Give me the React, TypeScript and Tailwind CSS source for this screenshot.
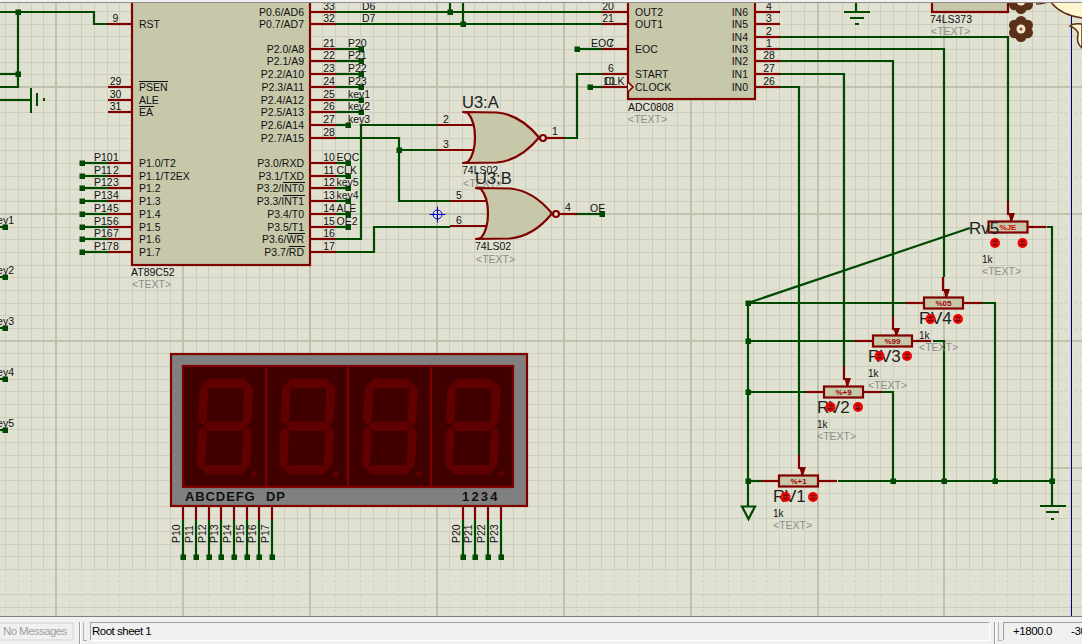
import React from "react";

const RED = "#800000";
const GRN = "#004a00";
const SW = 2.2;
const FONT = "'Liberation Sans', Arial, sans-serif";
const MINOR = "#cdcebd";
const MAJOR = "#c0c1ae";

const T = ({ x, y, s, size = 10.5, anchor = "start", fill = "#111", w }: { x: number; y: number; s: string; size?: number; anchor?: "start" | "middle" | "end"; fill?: string; w?: number }) => (
  <text x={x} y={y} fontSize={size} textAnchor={anchor} fill={fill} fontFamily={FONT} fontWeight={w}>
    {s}
  </text>
);
const Wire = ({ p, c = GRN }: { p: string; c?: string }) => <polyline points={p} fill="none" stroke={c} strokeWidth={SW} />;
const Pin = ({ x1, x2, y }: { x1: number; x2: number; y: number }) => <line x1={x1} x2={x2} y1={y} y2={y} stroke={RED} strokeWidth={SW} />;
const J = ({ x, y }: { x: number; y: number }) => <rect x={x - 2.5} y={y - 2.5} width={5.5} height={5.5} fill={GRN} />;
const Txt = ({ x, y }: { x: number; y: number }) => <T x={x} y={y} s="<TEXT>" fill="#8c8c8c" />;

const seq = (a: number, n: number, d = 12.68) => Array.from({ length: n }, (_, i) => Math.round(a + i * d));

const gridX = seq(5.3, 85);
const majorX = [56, 183, 310, 437, 564, 691, 818, 944];
const gridY = seq(10, 48).filter((y) => y < 614);
const majorY = [86, 213, 340];

const Grid = () => (
  <g shapeRendering="crispEdges">
    {gridX.map((x) => (
      <g key={x}>
        <line x1={x + 0.5} x2={x + 0.5} y1={0} y2={569} stroke={MINOR} />
        <line x1={x + 0.5} x2={x + 0.5} y1={569} y2={616} stroke={MINOR} strokeDasharray="2 3" />
      </g>
    ))}
    {gridY.map((y) => {
      const low = y > 572 && y < 590;
      const dotted = y > 50 && y < 430;
      return (
        <g key={y}>
          <line x1={0} x2={dotted ? 1050 : 1082} y1={y + 0.5} y2={y + 0.5} stroke={MINOR} strokeDasharray={low ? "1 12" : undefined} />
          {dotted && <line x1={1050} x2={1082} y1={y + 0.5} y2={y + 0.5} stroke={MINOR} strokeDasharray="2 3" />}
        </g>
      );
    })}
    {majorX.map((x) => (
      <rect key={x} x={x - 1} y={0} width={2} height={616} fill={MAJOR} />
    ))}
    {majorY.map((y) => (
      <rect key={y} x={0} y={y - 1} width={1082} height={2} fill={MAJOR} />
    ))}
    <rect x={1050} y={466} width={32} height={2} fill={MAJOR} />
  </g>
);

const leftCtl: [number, string, string][] = [
  [23, "9", "RST"],
  [86, "29", "PSEN"],
  [99, "30", "ALE"],
  [111, "31", "EA"],
];
const p1y = [162, 175, 187, 200, 213, 226, 238, 251];
const p1n = ["P1.0/T2", "P1.1/T2EX", "P1.2", "P1.3", "P1.4", "P1.5", "P1.6", "P1.7"];
const right: [number, string, string][] = [
  [11, "33", "P0.6/AD6"],
  [23, "32", "P0.7/AD7"],
  [48, "21", "P2.0/A8"],
  [60, "22", "P2.1/A9"],
  [73, "23", "P2.2/A10"],
  [86, "24", "P2.3/A11"],
  [99, "25", "P2.4/A12"],
  [111, "26", "P2.5/A13"],
  [124, "27", "P2.6/A14"],
  [137, "28", "P2.7/A15"],
  [162, "10", "P3.0/RXD"],
  [175, "11", "P3.1/TXD"],
  [187, "12", "P3.2/INT0"],
  [200, "13", "P3.3/INT1"],
  [213, "14", "P3.4/T0"],
  [226, "15", "P3.5/T1"],
  [238, "16", "P3.6/WR"],
  [251, "17", "P3.7/RD"],
];

const Mcu = () => (
  <g>
    <rect x={132} y={-4} width={178} height={268} fill="#c7c8aa" stroke={RED} strokeWidth={SW} />
    {leftCtl.map(([y, n, l]) => (
      <g key={n}>
        <Pin x1={108} x2={132} y={y} />
        <T x={115.5} y={y - 2} s={n} anchor="middle" />
        <T x={139} y={y + 3.5} s={l} />
      </g>
    ))}
    <line x1={139} x2={168} y1={80.5} y2={80.5} stroke="#111" />
    <line x1={139} x2={154} y1={105.5} y2={105.5} stroke="#111" />
    {p1y.map((y, i) => (
      <g key={y}>
        <Pin x1={108} x2={132} y={y} />
        <polyline points={`82,${y} 108,${y}`} stroke={GRN} strokeWidth={SW} />
        <J x={82} y={y} />
        <T x={94} y={y - 2} s={`P1${i}`} />
        <T x={116} y={y - 2} s={String(i + 1)} anchor="middle" />
        <T x={139} y={y + 3.5} s={p1n[i]} />
      </g>
    ))}
    {right.map(([y, n, l]) => (
      <g key={n}>
        <Pin x1={310} x2={336} y={y} />
        <T x={329} y={y - 2} s={n} anchor="middle" />
        <T x={304} y={y + 3.5} s={l} anchor="end" />
      </g>
    ))}
    {[181.5, 194.5].map((y) => (
      <line key={y} x1={283} x2={305} y1={y} y2={y} stroke="#111" />
    ))}
    <line x1={288} x2={305} y1={232.5} y2={232.5} stroke="#111" />
    <line x1={289} x2={305} y1={245.5} y2={245.5} stroke="#111" />
    <T x={131} y={275} s="AT89C52" />
    <Txt x={132} y={287} />
  </g>
);

const McuNets = () => (
  <g>
    <Wire p="108,23 94,23 94,11 0,11" />
    <Wire p="18,11 18,86 0,86" />
    <Wire p="18,73 0,73" />
    <J x={18} y={11} />
    <J x={18} y={73} />
    <Wire p="0,99 31,99" />
    <rect x={30} y={87} width={2} height={25} fill={GRN} />
    <rect x={36} y={92} width={2} height={13} fill={GRN} />
    <rect x={43} y={97} width={2} height={3} fill={GRN} />
    {[
      [226, "key1"],
      [276, "key2"],
      [327, "key3"],
      [378, "key4"],
      [429, "key5"],
    ].map(([y, l]) => (
      <g key={l as string}>
        <Wire p={`0,${y} 5,${y}`} />
        <J x={5} y={y as number} />
        <T x={14} y={(y as number) - 3} s={l as string} anchor="end" />
      </g>
    ))}
    <Wire p="336,11 602,11" />
    <Wire p="336,23 602,23" />
    <Wire p="450,2 450,11" />
    <Wire p="463,2 463,23" />
    <J x={450} y={11} />
    <J x={463} y={23} />
    <T x={362} y={9} s="D6" />
    <T x={362} y={21} s="D7" />
    {[
      [48, "P20"],
      [60, "P21"],
      [73, "P22"],
      [86, "P23"],
      [99, "key1"],
      [111, "key2"],
    ].map(([y, l]) => (
      <g key={l as string}>
        <Wire p={`336,${y} 361,${y}`} />
        <J x={361} y={y as number} />
        <T x={348} y={(y as number) - 2} s={l as string} />
      </g>
    ))}
    <Wire p="336,124 348,124" />
    <J x={348} y={124} />
    <T x={348} y={122} s="key3" />
    <Wire p="437,124 361,124 361,238 336,238" />
    <Wire p="336,137 399,137 399,200 450,200" />
    <Wire p="399,149 437,149" />
    <J x={399} y={149} />
    <Wire p="336,251 374,251 374,226 450,226" />
    {[
      [162, "EOC"],
      [175, "CLK"],
      [187, "key5"],
      [200, "key4"],
      [213, "ALE"],
      [226, "OE2"],
    ].map(([y, l]) => (
      <g key={l as string}>
        <Wire p={`336,${y} 348,${y}`} />
        <J x={348} y={y as number} />
        <T x={336.5} y={(y as number) - 2} s={l as string} />
      </g>
    ))}
  </g>
);

const Gate = ({ dx, dy, a, b, o, ref1 }: { dx: number; dy: number; a: string; b: string; o: string; ref1: string }) => (
  <g transform={`translate(${dx} ${dy})`}>
    <Pin x1={437} x2={475} y={124} />
    <Pin x1={437} x2={475} y={149} />
    <path d="M463 111 L497 111.5 C513 113 528 123 539 136.5 C528 150 513 160 497 161.5 L463 162 L468 161 C473 155 475 147 475 136.5 C475 126 473 118 468 112 Z" fill="#c7c8aa" stroke={RED} strokeWidth={SW} strokeLinejoin="round" />
    <circle cx={543} cy={137} r={3} fill="#e0e1d1" stroke={RED} strokeWidth={SW} />
    <Pin x1={546} x2={564} y={137} />
    <T x={446} y={122} s={a} anchor="middle" />
    <T x={446} y={147} s={b} anchor="middle" />
    <T x={555} y={134} s={o} anchor="middle" />
    <T x={462} y={107} s={ref1} size={16.5} fill="#222" />
    <T x={462} y={173} s="74LS02" />
    <Txt x={463} y={186} />
  </g>
);

const Adc = () => (
  <g>
    <rect x={628} y={-4} width={127} height={102} fill="#c7c8aa" stroke={RED} strokeWidth={SW} />
    {[
      [11, "20", "OUT2"],
      [23, "21", "OUT1"],
      [48, "7", "EOC"],
      [73, "6", "START"],
      [86, "", "CLOCK"],
    ].map(([y, n, l]) => (
      <g key={l as string}>
        <Pin x1={602} x2={628} y={y as number} />
        {n && <T x={(n as string).length > 1 ? 608 : 611} y={(y as number) - 2} s={n as string} anchor="middle" />}
        <T x={635} y={(y as number) + 3.5} s={l as string} />
      </g>
    ))}
    <T x={609} y={84} s="10" anchor="middle" />
    <T x={604} y={84} s="CLK" />
    <polyline points="628,81 633,86 628,91" fill="#e0e1d1" stroke={RED} strokeWidth={1.6} />
    {[
      [11, "4", "IN6"],
      [23, "3", "IN5"],
      [36, "2", "IN4"],
      [48, "1", "IN3"],
      [60, "28", "IN2"],
      [73, "27", "IN1"],
      [86, "26", "IN0"],
    ].map(([y, n, l]) => (
      <g key={l as string}>
        <Pin x1={755} x2={780} y={y as number} />
        <T x={769} y={(y as number) - 2} s={n as string} anchor="middle" />
        <T x={748} y={(y as number) + 3.5} s={l as string} anchor="end" />
      </g>
    ))}
    <T x={628} y={110} s="ADC0808" />
    <Txt x={628} y={122} />
    <Wire p="602,48 577,48" />
    <J x={577} y={48} />
    <T x={591} y={46} s="EOC" />
    <Wire p="602,86 590,86" />
    <J x={590} y={86} />
    <Wire p="564,137 577,137 577,73 602,73" />
    <Wire p="577,213 602,213" />
    <J x={602} y={213} />
    <T x={590} y={211} s="OE" />
  </g>
);

const Pot = ({ x, y, wx, wt, name, tag, nx, ty, cy, lx, ly, gnd }: { x: number; y: number; wx: number; wt: number; name: string; tag: string; nx: number; ty: number; cy: number; lx?: number; ly?: number; gnd?: boolean }) => (
  <g>
    {!gnd && <Pin x1={x - 18} x2={x} y={y} />}
    <Pin x1={x + 39} x2={x + 58} y={y} />
    <polyline points={`${wx},${wt} ${wx},${wt + 13} ${wx + 3},${wt + 13} ${wx + 3},${y - 6}`} fill="none" stroke={RED} strokeWidth={SW} />
    <polygon points={`${wx},${wt + 12} ${wx + 7},${wt + 12} ${wx + 3.5},${y - 4}`} fill={RED} />
    <rect x={x} y={y - 5.5} width={39} height={11} fill="#c7c8aa" stroke={RED} strokeWidth={SW} />
    <text x={x + 19.5} y={y + 3} fontSize={8} fill={gnd ? "#d80000" : "#a00000"} textAnchor="middle" fontFamily={FONT} fontWeight={700}>
      {tag}
    </text>
    <T x={nx} y={ty} s={name} size={17} fill="#222" />
    {[x + 6.5, x + 34].map((c, i) => (
      <g key={i}>
        <circle cx={c} cy={cy} r={5} fill="#ee0000" />
        <circle cx={c} cy={cy} r={2.6} fill="#700000" />
        <line x1={c - 4} x2={c + 4} y1={cy} y2={cy} stroke="#ff3030" />
      </g>
    ))}
    <T x={lx ?? nx} y={ly ?? ty + 14.5} s="1k" size={10} />
    <Txt x={lx ?? nx} y={(ly ?? ty + 14.5) + 12} />
  </g>
);

const Pots = () => (
  <g>
    <Wire p="780,36 1008,36 1008,200" />
    <Wire p="780,48 944,48 944,276" />
    <Wire p="780,60 893,60 893,315" />
    <Wire p="780,73 844,73 844,365" />
    <Wire p="780,86 799,86 799,454" />
    <Wire p="748,302 970,227" />
    <Wire p="748,302 748,505" />
    <Wire p="748,302 907,302" />
    <Wire p="748,340 856,340" />
    <Wire p="748,391 806,391" />
    <Wire p="748,480 761,480" />
    <Wire p="838,480 1052,480" />
    <Wire p="881,391 893,391 893,480" />
    <Wire p="933,340 944,340 944,480" />
    <Wire p="982,302 995,302 995,480" />
    <Wire p="1047,226 1052,226 1052,505" />
    {[
      [748, 302],
      [748, 340],
      [748, 391],
      [748, 480],
      [893, 480],
      [944, 480],
      [995, 480],
      [1052, 480],
    ].map(([x, y]) => (
      <J key={`${x}-${y}`} x={x} y={y} />
    ))}
    <polygon points="742,505.5 755,505.5 748.5,518" fill="none" stroke={GRN} strokeWidth={SW} />
    <rect x={1040} y={504} width={26} height={2} fill={GRN} />
    <rect x={1046} y={510} width={13} height={2} fill={GRN} />
    <rect x={1051} y={517} width={3} height={2} fill={GRN} />
    <Pot x={988.5} y={226} wx={1008} wt={200} name="Rv5" tag="%JE" nx={969} ty={233} cy={242} lx={982} ly={262} gnd />
    <Pot x={924} y={302} wx={943} wt={276} name="RV4" tag="%05" nx={919} ty={323} cy={318} />
    <Pot x={873} y={340} wx={893} wt={315} name="RV3" tag="%99" nx={868} ty={361} cy={355} />
    <Pot x={824} y={391} wx={844} wt={365} name="RV2" tag="%+9" nx={817} ty={412} cy={406} />
    <Pot x={779} y={480} wx={799} wt={454} name="RV1" tag="%+1" nx={773} ty={501} cy={496} />
  </g>
);

const TopRight = () => (
  <g>
    <rect x={932} y={-4} width={76} height={15} fill="#c7c8aa" stroke={RED} strokeWidth={SW} />
    <T x={930} y={22} s="74LS373" />
    <Txt x={931} y={34} />
    <line x1={856} x2={856} y1={2} y2={11} stroke={GRN} strokeWidth={SW} />
    <rect x={844} y={10} width={26} height={2} fill={GRN} />
    <rect x={850} y={16} width={14} height={2} fill={GRN} />
    <rect x={855} y={22} width={4} height={2} fill={GRN} />
    <line x1={1071.5} x2={1071.5} y1={0} y2={616} stroke="#000080" strokeWidth={1} />
    {[0, 28].map((cy) => (
      <g key={cy}>
        {[0, 60, 120, 180, 240, 300].map((a) => (
          <circle key={a} cx={1021 + 7.5 * Math.sin((a * Math.PI) / 180)} cy={cy + 7.5 * Math.cos((a * Math.PI) / 180)} r={5.5} fill="#5a3018" />
        ))}
        <circle cx={1021} cy={cy} r={8} fill="#5a3018" />
        <circle cx={1021} cy={cy} r={4.5} fill="#f6e3d0" />
        <circle cx={1021} cy={cy} r={1.5} fill="#7a4a30" />
      </g>
    ))}
    <path d="M1036 3 Q1044 3 1050 0 L1082 0 L1082 17 Q1060 14 1050 0" fill="#fff6cf" stroke="none" />
    <path d="M1036 3 Q1044 3 1050 0 Q1060 14 1082 17" fill="none" stroke="#5a3018" strokeWidth={1.5} />
    <path d="M1082 23 Q1073 22 1070 25 Q1079 29 1078 34 Q1076 42 1082 47 Z" fill="#fff6cf" stroke="#5a3018" strokeWidth={1.5} />
  </g>
);

const Digit = ({ dx }: { dx: number }) => {
  const segs = [
    "133,127 148,113 250,113 263,127 250,140 145,140",
    "120,140 133,127 145,140 140,240 128,252 114,240",
    "265,127 279,140 274,240 262,254 249,240 252,140",
    "130,255 143,242 250,242 262,255 248,270 143,270",
    "127,258 140,272 135,372 125,385 112,372 114,272",
    "262,258 275,272 270,372 258,385 245,372 250,272",
    "125,385 138,372 245,372 258,385 245,400 140,400",
    "281,389 292,400 281,411 270,400",
  ];
  return (
    <g transform={`translate(${dx} 0)`}>
      {segs.map((p) => (
        <polygon key={p} points={p} fill="#600000" />
      ))}
    </g>
  );
};

const Display = () => (
  <g>
    <rect x={171} y={353} width={356} height={152} fill="#808080" stroke={RED} strokeWidth={SW} />
    <rect x={183} y={365} width={330} height={121} fill="#400000" stroke={RED} strokeWidth={SW} />
    {[266, 348, 431].map((x) => (
      <line key={x} x1={x} x2={x} y1={365} y2={486} stroke={RED} strokeWidth={SW} />
    ))}
    <g transform="translate(160 340) scale(0.3333)">
      {[0, 247, 495, 743].map((d) => (
        <Digit key={d} dx={d} />
      ))}
    </g>
    <text x={185} y={500} fontSize={13} fontWeight={700} fill="#111" fontFamily={FONT} letterSpacing={0.9}>
      ABCDEFG
    </text>
    <text x={266} y={500} fontSize={13} fontWeight={700} fill="#111" fontFamily={FONT} letterSpacing={0.9}>
      DP
    </text>
    <text x={462} y={500} fontSize={13} fontWeight={700} fill="#111" fontFamily={FONT} letterSpacing={2.2}>
      1234
    </text>
    {[183, 196, 209, 221, 234, 247, 259, 272, 463, 475, 488, 501].map((x, i) => (
      <g key={x}>
        <line x1={x} x2={x} y1={505} y2={519} stroke={RED} strokeWidth={SW} />
        <line x1={x} x2={x} y1={519} y2={556} stroke={GRN} strokeWidth={SW} />
        <J x={x} y={556} />
        <text x={0} y={0} transform={`translate(${x - 3} 542) rotate(-90)`} fontSize={10.5} fill="#111" fontFamily={FONT}>
          {i < 8 ? `P1${i}` : `P2${i - 8}`}
        </text>
      </g>
    ))}
  </g>
);

const Schematic = () => (
  <svg width={1082} height={614} viewBox="0 2 1082 614" className="block shrink-0">
    <rect x={0} y={0} width={1082} height={616} fill="#e0e1d1" />
    <Grid />
    <TopRight />
    <McuNets />
    <Mcu />
    <Gate dx={0} dy={0} a="2" b="3" o="1" ref1="U3:A" />
    <Gate dx={13} dy={76} a="5" b="6" o="4" ref1="U3:B" />
    <g stroke="#0000c0" fill="none">
      <circle cx={437.5} cy={213.5} r={4.5} />
      <line x1={429.5} x2={445.5} y1={213.5} y2={213.5} />
      <line x1={437.5} x2={437.5} y1={205.5} y2={221.5} />
    </g>
    <Adc />
    <Pots />
    <Display />
  </svg>
);

export default function App() {
  return (
    <div className="flex h-[644px] w-[1082px] flex-col overflow-hidden bg-[#f0f0f0]" style={{ fontFamily: FONT }}>
      <div className="h-[3px] shrink-0 border-b border-[#8c8c8c] bg-[#f0f0f0]" />
      <div className="h-[613px] shrink-0 overflow-hidden">
        <Schematic />
      </div>
      <div className="flex h-[28px] shrink-0 items-start border-t border-[#808080] bg-[#f0f0f0] pt-[5px] text-black">
        <div className="flex h-[19px] w-[74px] shrink-0 items-center border-y-2 border-r-2 border-[#e2e2e2] pl-[3px] text-[11.5px] tracking-[-0.6px] whitespace-nowrap text-[#a0a0a0]">No Messages</div>
        <div className="ml-[5px] h-[23px] w-[2px] shrink-0 border-x border-l-[#a0a0a0] border-r-white" />
        <div className="ml-[2px] h-[19px] w-[4px] shrink-0 border-b border-l border-[#b0b0b0]" />
        <div className="ml-[3px] flex h-[18px] w-[899px] shrink-0 items-center border-t border-l border-[#a0a0a0] border-b-white pl-[1px] text-[11.5px] tracking-[-0.5px] whitespace-nowrap shadow-[1px_1px_0_white]">Root sheet 1</div>
        <div className="ml-[5px] h-[23px] w-[2px] shrink-0 border-x border-l-[#a0a0a0] border-r-white" />
        <div className="ml-[2px] h-[19px] w-[4px] shrink-0 border-b border-l border-[#b0b0b0]" />
        <div className="ml-[1px] flex h-[18px] flex-1 items-center border-t border-l border-[#a0a0a0] pl-[9px] text-[11.5px] tracking-[-0.4px] whitespace-nowrap">
          <span className="w-[58px] shrink-0">+1800.0</span>
          <span>-30</span>
        </div>
      </div>
    </div>
  );
}
